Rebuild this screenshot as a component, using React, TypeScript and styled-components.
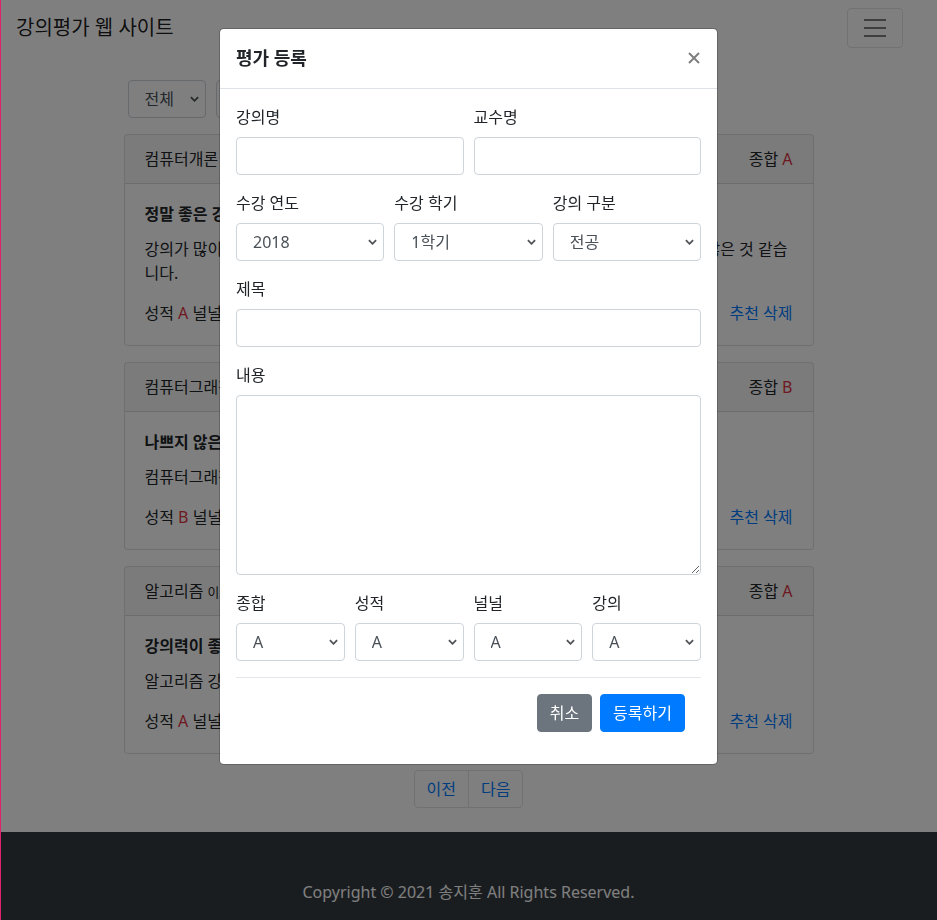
import React from 'react';
import styled, { createGlobalStyle } from 'styled-components';

interface Review {
  id: number;
  lecture: string;
  professor: string;
  total: string;
  title: string;
  content: string;
  credit: string;
  comfortable: string;
  lectureScore: string;
}

const reviews: Review[] = [
  {
    id: 1,
    lecture: '컴퓨터개론',
    professor: '나교수',
    total: 'A',
    title: '정말 좋은 강의입니다.',
    content:
      '강의가 많이 어렵지만 교수님께서 매우 친절하게 자세히 설명해주셔서 정말 배운 것이 많은 것 같습니다.',
    credit: 'A',
    comfortable: 'A',
    lectureScore: 'A',
  },
  {
    id: 2,
    lecture: '컴퓨터그래픽스',
    professor: '홍교수',
    total: 'B',
    title: '나쁘지 않은 강의입니다.',
    content: '컴퓨터그래픽스 강의는 무난합니다.',
    credit: 'B',
    comfortable: 'A',
    lectureScore: 'B',
  },
  {
    id: 3,
    lecture: '알고리즘',
    professor: '이교수',
    total: 'A',
    title: '강의력이 좋습니다.',
    content: '알고리즘 강의를 재미있게 들었습니다.',
    credit: 'A',
    comfortable: 'B',
    lectureScore: 'A',
  },
];

const ChevronIcon = () => (
  <Chevron viewBox="0 0 10 6">
    <path d="M1 1l4 4 4-4" fill="none" stroke="#4f5357" strokeWidth="2" />
  </Chevron>
);

const SelectBox = ({ value, options }: { value: string; options: string[] }) => (
  <SelectWrap>
    <Select defaultValue={value}>
      {options.map((o) => (
        <option key={o}>{o}</option>
      ))}
    </Select>
    <ChevronIcon />
  </SelectWrap>
);

const grades = ['A', 'B', 'C', 'D', 'F'];

const App = () => {
  return (
    <>
      <GlobalStyle />
      <Navbar>
        <Brand>강의평가 웹 사이트</Brand>
        <Toggler>
          <svg width="30" height="30" viewBox="0 0 30 30">
            <path d="M4 7h22M4 15h22M4 23h22" stroke="rgba(0,0,0,0.5)" strokeWidth="2" />
          </svg>
        </Toggler>
      </Navbar>

      <Container>
        <FilterForm>
          <FilterItem $width={78}>
            <SelectBox value="전체" options={['전체', '전공', '교양', '기타']} />
          </FilterItem>
          <FilterInput placeholder="내용을 입력하세요." />
          <FilterButton $color="#007bff">검색</FilterButton>
          <FilterButton $color="#007bff">등록하기</FilterButton>
          <FilterButton $color="#dc3545">신고</FilterButton>
        </FilterForm>

        {reviews.map((review) => (
          <Card key={review.id}>
            <CardHeader>
              <span>
                {review.lecture}&nbsp;<small>{review.professor}</small>
              </span>
              <span>
                종합 <Grade>{review.total}</Grade>
              </span>
            </CardHeader>
            <CardBody>
              <CardTitle>{review.title}</CardTitle>
              <CardText>{review.content}</CardText>
              <CardRow>
                <span>
                  성적 <Grade>{review.credit}</Grade> 널널 <Grade>{review.comfortable}</Grade> 강의{' '}
                  <Grade>{review.lectureScore}</Grade>
                </span>
                <span>
                  <TextLink>추천</TextLink> <TextLink>삭제</TextLink>
                </span>
              </CardRow>
            </CardBody>
          </Card>
        ))}

        <Pagination>
          <PageLink $first>이전</PageLink>
          <PageLink>다음</PageLink>
        </Pagination>
      </Container>

      <Footer>Copyright © 2021 송지훈 All Rights Reserved.</Footer>

      <Backdrop />

      <ModalLayer>
        <Dialog>
          <ModalHeader>
            <ModalTitle>평가 등록</ModalTitle>
            <CloseButton aria-label="닫기">
              <svg width="12" height="12" viewBox="0 0 12 12">
                <path d="M1 1l10 10M11 1L1 11" stroke="#000" strokeWidth="2" />
              </svg>
            </CloseButton>
          </ModalHeader>
          <ModalBody>
            <FormRow $cols={2}>
              <FormGroup>
                <Label>강의명</Label>
                <TextInput />
              </FormGroup>
              <FormGroup>
                <Label>교수명</Label>
                <TextInput />
              </FormGroup>
            </FormRow>
            <FormRow $cols={3}>
              <FormGroup>
                <Label>수강 연도</Label>
                <SelectBox value="2018" options={['2011', '2012', '2013', '2014', '2015', '2016', '2017', '2018']} />
              </FormGroup>
              <FormGroup>
                <Label>수강 학기</Label>
                <SelectBox value="1학기" options={['1학기', '여름학기', '2학기', '겨울학기']} />
              </FormGroup>
              <FormGroup>
                <Label>강의 구분</Label>
                <SelectBox value="전공" options={['전공', '교양', '기타']} />
              </FormGroup>
            </FormRow>
            <FormGroup>
              <Label>제목</Label>
              <TextInput />
            </FormGroup>
            <FormGroup>
              <Label>내용</Label>
              <TextArea />
            </FormGroup>
            <FormRow $cols={4}>
              {['종합', '성적', '널널', '강의'].map((name) => (
                <FormGroup key={name}>
                  <Label>{name}</Label>
                  <SelectBox value="A" options={grades} />
                </FormGroup>
              ))}
            </FormRow>
            <ModalFooter>
              <Button $color="#6c757d">취소</Button>
              <Button $color="#007bff">등록하기</Button>
            </ModalFooter>
          </ModalBody>
        </Dialog>
      </ModalLayer>

      <EdgeLine />
    </>
  );
};

export default App;

const GlobalStyle = createGlobalStyle`
  *, *::before, *::after {
    box-sizing: border-box;
  }
  html, body {
    margin: 0;
    padding: 0;
    overflow: hidden;
  }
  body {
    font-family: "Noto Sans", "Noto Sans CJK KR", sans-serif;
    font-size: 16px;
    line-height: 1.5;
    color: #212529;
    background: #fff;
  }
`;

const Navbar = styled.nav`
  display: flex;
  align-items: center;
  justify-content: space-between;
  height: 56px;
  padding: 8px 34px 8px 16px;
`;

const Brand = styled.a`
  font-size: 20px;
  line-height: 30px;
  padding: 5px 0;
  color: rgba(0, 0, 0, 0.9);
`;

const Toggler = styled.button`
  display: flex;
  align-items: center;
  justify-content: center;
  width: 56px;
  height: 40px;
  padding: 4px 12px;
  background: transparent;
  border: 1px solid rgba(0, 0, 0, 0.1);
  border-radius: 4px;
`;

const Container = styled.main`
  max-width: 720px;
  margin: 0 auto;
  padding: 0 15px;
`;

const FilterForm = styled.form`
  display: flex;
  gap: 8px;
  padding: 24px 0 0 4px;
`;

const FilterItem = styled.div<{ $width: number }>`
  width: ${(p) => p.$width}px;
`;

const FilterInput = styled.input`
  width: 200px;
  height: 38px;
  margin-left: 2px;
  padding: 6px 12px;
  font: inherit;
  border: 1px solid #ced4da;
  border-radius: 4px;
`;

const FilterButton = styled.button<{ $color: string }>`
  height: 38px;
  padding: 6px 12px;
  font: inherit;
  color: #fff;
  background: ${(p) => p.$color};
  border: 1px solid ${(p) => p.$color};
  border-radius: 4px;
`;

const Card = styled.section`
  margin-top: 16px;
  background: #fff;
  border: 1px solid rgba(0, 0, 0, 0.125);
  border-radius: 4px;
`;

const CardHeader = styled.div`
  display: flex;
  justify-content: space-between;
  padding: 12px 20px;
  background: rgba(0, 0, 0, 0.03);
  border-bottom: 1px solid rgba(0, 0, 0, 0.125);

  small {
    font-size: 80%;
  }
`;

const CardBody = styled.div`
  padding: 20px;
`;

const CardTitle = styled.h5`
  margin: 0 0 12px;
  font-size: 16px;
  font-weight: 700;
  line-height: 21px;
`;

const CardText = styled.p`
  margin: 0 0 16px;
`;

const CardRow = styled.div`
  display: flex;
  justify-content: space-between;
`;

const Grade = styled.span`
  color: #dc3545;
`;

const TextLink = styled.a`
  color: #007bff;
`;

const Pagination = styled.nav`
  display: flex;
  justify-content: center;
  margin: 16px 0 24px;
`;

const PageLink = styled.a<{ $first?: boolean }>`
  padding: 8px 12px;
  line-height: 20px;
  color: #007bff;
  background: #fff;
  border: 1px solid #dee2e6;
  margin-left: ${(p) => (p.$first ? '0' : '-1px')};
  border-radius: ${(p) => (p.$first ? '4px 0 0 4px' : '0 4px 4px 0')};
`;

const Footer = styled.footer`
  padding: 48px;
  text-align: center;
  color: #fff;
  background: #343a40;
`;

const Backdrop = styled.div`
  position: fixed;
  inset: 0;
  z-index: 1040;
  background: rgba(0, 0, 0, 0.5);
`;

const ModalLayer = styled.div`
  position: fixed;
  inset: 0;
  z-index: 1050;
  overflow: hidden;
`;

const Dialog = styled.div`
  width: 499px;
  margin: 28px auto;
  background: #fff;
  background-clip: padding-box;
  border: 1px solid rgba(0, 0, 0, 0.2);
  border-radius: 4.8px;
`;

const ModalHeader = styled.div`
  display: flex;
  align-items: flex-start;
  justify-content: space-between;
  padding: 16px;
  border-bottom: 1px solid #dee2e6;
`;

const ModalTitle = styled.h5`
  margin: 0;
  font-size: 18px;
  font-weight: 700;
  line-height: 27px;
`;

const CloseButton = styled.button`
  display: flex;
  padding: 7px 1px;
  margin: 0 0 0 auto;
  opacity: 0.5;
  background: transparent;
  border: 0;
`;

const ModalBody = styled.div`
  padding: 16px;
`;

const FormRow = styled.div<{ $cols: number }>`
  display: grid;
  grid-template-columns: repeat(${(p) => p.$cols}, 1fr);
  column-gap: 10px;
`;

const FormGroup = styled.div`
  margin-bottom: 16px;
`;

const Label = styled.label`
  display: block;
  margin-bottom: 8px;
`;

const TextInput = styled.input`
  display: block;
  width: 100%;
  height: 38px;
  padding: 6px 12px;
  font: inherit;
  color: #495057;
  background: #fff;
  border: 1px solid #ced4da;
  border-radius: 4px;
`;

const TextArea = styled.textarea`
  display: block;
  width: 100%;
  height: 180px;
  padding: 6px 12px;
  font: inherit;
  color: #495057;
  border: 1px solid #ced4da;
  border-radius: 4px;
  resize: vertical;
`;

const SelectWrap = styled.div`
  position: relative;
`;

const Select = styled.select`
  appearance: none;
  display: block;
  width: 100%;
  height: 38px;
  padding: 6px 24px 6px 16px;
  font: inherit;
  color: #495057;
  background: #fff;
  border: 1px solid #ced4da;
  border-radius: 4px;
`;

const Chevron = styled.svg`
  position: absolute;
  right: 7px;
  top: 50%;
  width: 9px;
  height: 6px;
  margin-top: -3px;
  pointer-events: none;
`;

const ModalFooter = styled.div`
  display: flex;
  justify-content: flex-end;
  gap: 8px;
  padding: 16px;
  border-top: 1px solid #e3e6ea;
`;

const Button = styled.button<{ $color: string }>`
  padding: 6px 12px;
  font: inherit;
  line-height: 24px;
  color: #fff;
  background: ${(p) => p.$color};
  border: 1px solid ${(p) => p.$color};
  border-radius: 4px;
`;

const EdgeLine = styled.div`
  position: fixed;
  top: 0;
  bottom: 0;
  left: 0;
  z-index: 2000;
  width: 1px;
  background: #e0226c;
`;
